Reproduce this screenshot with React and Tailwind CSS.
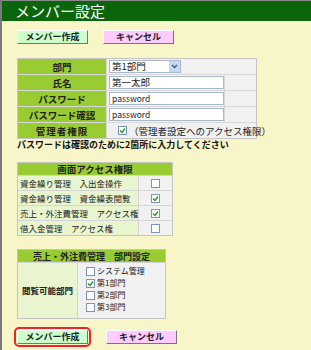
const font = { fontFamily: '"Noto Sans CJK JP", "Noto Sans", sans-serif' };

function Btn({ children, color, ring }) {
  return (
    <div className={ring ? "rounded-[5px] border-2 border-[#e8262b] p-px -m-[3px]" : ""}>
      <div
        className={`w-[71px] h-[14px] flex items-center justify-center text-[9px] leading-[12px] font-bold text-[#222] border border-t-[#fff] border-l-[#fff] border-b-[#777] border-r-[#777] ${color}`}
      >
        {children}
      </div>
    </div>
  );
}

function Check({ on }) {
  return (
    <span className="inline-flex w-[9px] h-[9px] border border-[#7f95b5] bg-white items-center justify-center shrink-0">
      {on && (
        <svg width="7" height="7" viewBox="0 0 7 7">
          <path d="M1 3.5 L3 5.5 L6 1.5" stroke="#2a9a2a" strokeWidth="1.4" fill="none" />
        </svg>
      )}
    </span>
  );
}

function Label({ children }) {
  return (
    <div className="bg-[#99cc33] h-[15px] flex items-center justify-center text-[9.5px] leading-[12px] font-bold text-[#222]">
      {children}
    </div>
  );
}

function TextBox({ children, small }) {
  return (
    <div className="bg-[#f1f1f1] h-[15px] flex items-center pl-[2px]">
      <div className={`w-[115px] h-[13px] bg-white border border-[#aab8cc] flex items-center pl-[2px] leading-[11px] text-[#222] ${small ? "text-[8.5px]" : "text-[9.5px]"}`}>
        {children}
      </div>
    </div>
  );
}

export default function App() {
  const access = [
    ["資金繰り管理　入出金操作", false],
    ["資金繰り管理　資金繰表閲覧", true],
    ["売上・外注費管理　アクセス権", true],
    ["借入金管理　アクセス権", false],
  ];
  const depts = [
    ["システム管理", false],
    ["第1部門", true],
    ["第2部門", false],
    ["第3部門", false],
  ];

  return (
    <div className="w-[311px] h-[350px] bg-[#f8f5c8] border-l-2 border-[#7a7a7a] overflow-hidden" style={font}>
      {/* Header */}
      <div className="h-[21px] bg-[#0b650b] border-t border-[#8a8a8a] text-white text-[15px] leading-[20px] pl-[13px]">
        メンバー設定
      </div>

      <div className="pl-[15px]">
        {/* Top buttons */}
        <div className="flex gap-[15px] mt-[9px]">
          <Btn color="bg-[#ccffcc]">メンバー作成</Btn>
          <Btn color="bg-[#ffccff]">キャンセル</Btn>
        </div>

        {/* Member form */}
        <div className="mt-[14px] w-[240px] grid grid-cols-[88px_117px_1fr] gap-px bg-[#d8d8d8] border border-[#c4c4c4]">
          <Label>部門</Label>
          <div className="col-span-2 bg-[#f1f1f1] h-[15px] flex items-center pl-[2px]">
            <div className="w-[72px] h-[13px] bg-white border border-[#aab8cc] flex items-center justify-between text-[9.5px] leading-[11px] text-[#222] pl-[2px]">
              第1部門
              <span className="w-[11px] h-[11px] bg-[#c9d7f0] flex items-center justify-center">
                <svg width="7" height="5" viewBox="0 0 7 5">
                  <path d="M1 1 L3.5 3.5 L6 1" stroke="#3d5a9a" strokeWidth="1.3" fill="none" />
                </svg>
              </span>
            </div>
          </div>
          <Label>氏名</Label>
          <TextBox>第一太郎</TextBox>
          <div className="bg-[#f1f1f1]" />
          <Label>パスワード</Label>
          <TextBox small>password</TextBox>
          <div className="bg-[#f1f1f1]" />
          <Label>パスワード確認</Label>
          <TextBox small>password</TextBox>
          <div className="bg-[#f1f1f1]" />
          <Label><span className="tracking-[1px]">管理者権限</span></Label>
          <div className="col-span-2 bg-[#f1f1f1] h-[15px] flex items-center pl-[11px] gap-[2px] text-[9.5px] leading-[12px] text-[#222] whitespace-nowrap">
            <Check on />
            （管理者設定へのアクセス権限）
          </div>
        </div>
        <div className="text-[9px] font-bold text-[#111] leading-[11px] whitespace-nowrap">
          パスワードは確認のために2箇所に入力してください
        </div>

        {/* Access table */}
        <div className="mt-[12px] w-[156px] grid grid-cols-[120px_1fr] gap-px bg-[#d4d4d4] border border-[#c4c4c4]">
          <div className="col-span-2 bg-[#99cc33] h-[12px] flex items-center justify-center text-[9.5px] leading-[11px] font-bold text-[#222]">
            画面アクセス権限
          </div>
          {access.map(([t, on]) => (
            <div key={t} className="contents">
              <div className="bg-[#e9f5cf] h-[14px] flex items-center pl-[2px] text-[8.5px] leading-[11px] text-[#222] whitespace-nowrap overflow-hidden">{t}</div>
              <div className="bg-[#f1f1f1] h-[14px] flex items-center justify-center"><Check on={on} /></div>
            </div>
          ))}
        </div>

        {/* Dept table */}
        <div className="mt-[13px] w-[149px] grid grid-cols-[59px_1fr] gap-px bg-[#d4d4d4] border border-[#c4c4c4]">
          <div className="col-span-2 bg-[#99cc33] h-[12px] flex items-center justify-center text-[9px] leading-[11px] font-bold text-[#222] whitespace-nowrap">
            売上・外注費管理　部門設定
          </div>
          <div className="bg-[#e9f5cf] flex items-center justify-center text-[8.5px] leading-[11px] font-bold text-[#222]">閲覧可能部門</div>
          <div className="bg-[#f1f1f1] pl-[8px] pt-[2px] pb-[5px]">
            {depts.map(([t, on]) => (
              <div key={t} className="h-[12px] flex items-center gap-[2px] text-[8px] leading-[10px] text-[#222]">
                <Check on={on} />
                {t}
              </div>
            ))}
          </div>
        </div>

        {/* Bottom buttons */}
        <div className="flex gap-[15px] mt-[11px]">
          <Btn color="bg-[#ccffcc]" ring>メンバー作成</Btn>
          <div className="ml-[3px]"><Btn color="bg-[#ffccff]">キャンセル</Btn></div>
        </div>
      </div>
    </div>
  );
}
